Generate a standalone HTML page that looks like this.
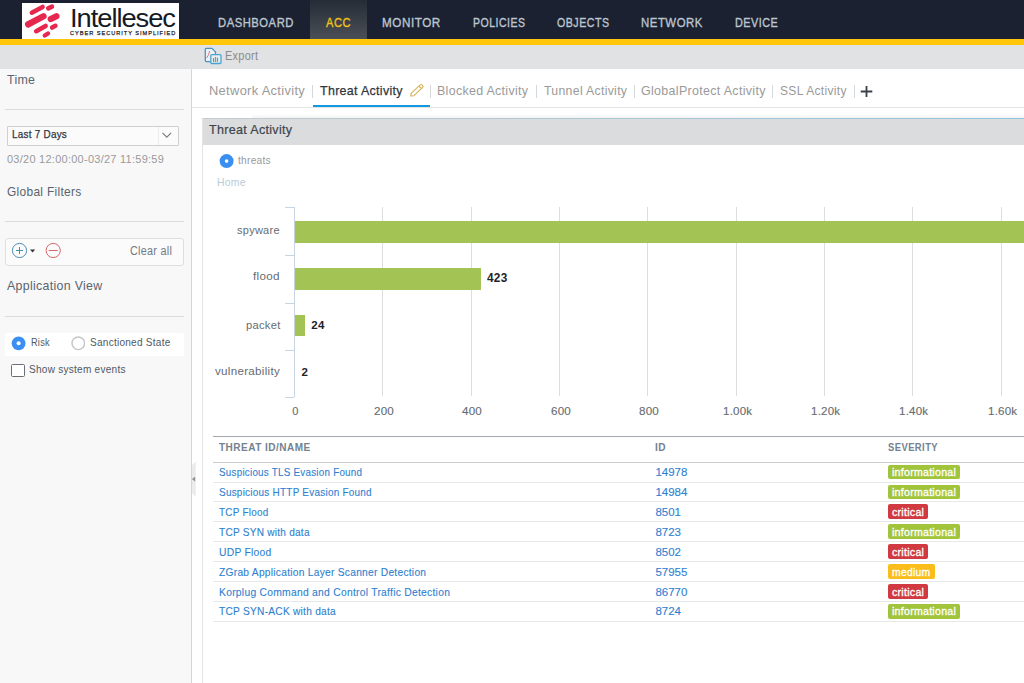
<!DOCTYPE html>
<html><head><meta charset="utf-8"><style>
html,body{margin:0;padding:0;}
body{width:1024px;height:683px;overflow:hidden;position:relative;background:#fff;font-family:"Liberation Sans",sans-serif;}
.t{position:absolute;white-space:nowrap;line-height:1;}
</style></head><body>
<div style="position:absolute;left:0;top:0;width:1024px;height:39px;background:#1b2130"></div>
<div style="position:absolute;left:310px;top:0;width:57px;height:39px;background:linear-gradient(#262c36,#4a4f57)"></div>
<div style="position:absolute;left:0;top:39px;width:1024px;height:6px;background:#ffc60a"></div>
<div style="position:absolute;left:22px;top:3px;width:157px;height:36px;background:#fff"></div>
<svg style="position:absolute;left:0;top:0" width="70" height="40" viewBox="0 0 70 40">
<g stroke="#e6284e" stroke-linecap="round" fill="none">
<line x1="31.8" y1="12.7" x2="42.6" y2="6.9" stroke-width="4.5"/>
<line x1="48.2" y1="8.4" x2="52" y2="6.6" stroke-width="4.5"/>
<line x1="28.2" y1="24.4" x2="43.5" y2="16.2" stroke-width="6.3"/>
<line x1="50.8" y1="19" x2="56.4" y2="16.2" stroke-width="6.3"/>
<line x1="36.2" y1="31.2" x2="45.6" y2="25.9" stroke-width="4.6"/>
<line x1="52.2" y1="27.6" x2="55.4" y2="25.8" stroke-width="4.6"/>
<line x1="44.8" y1="35.5" x2="48" y2="33.5" stroke-width="4.4"/>
</g></svg>
<div class="t" style="left:69.60px;top:4.67px;font-size:26.5px;color:#151a24;letter-spacing:-1.000px;transform:scaleX(1.0296);transform-origin:0 0;">Intellesec</div>
<div class="t" style="left:69.80px;top:30.61px;font-size:5.9px;color:#23272f;letter-spacing:1.000px;transform:scaleX(0.9573);transform-origin:0 0;-webkit-text-stroke:0.25px #23272f;">CYBER SECURITY SIMPLIFIED</div>
<div class="t" style="left:218.00px;top:16.00px;font-size:13px;color:#bcc6d0;letter-spacing:0.600px;transform:scaleX(0.8652);transform-origin:0 0;-webkit-text-stroke:0.35px #bcc6d0;">DASHBOARD</div>
<div class="t" style="left:382.10px;top:16.00px;font-size:13px;color:#bcc6d0;letter-spacing:0.600px;transform:scaleX(0.8990);transform-origin:0 0;-webkit-text-stroke:0.35px #bcc6d0;">MONITOR</div>
<div class="t" style="left:472.90px;top:16.00px;font-size:13px;color:#bcc6d0;letter-spacing:0.600px;transform:scaleX(0.8104);transform-origin:0 0;-webkit-text-stroke:0.35px #bcc6d0;">POLICIES</div>
<div class="t" style="left:557.00px;top:16.00px;font-size:13px;color:#bcc6d0;letter-spacing:0.600px;transform:scaleX(0.8182);transform-origin:0 0;-webkit-text-stroke:0.35px #bcc6d0;">OBJECTS</div>
<div class="t" style="left:641.40px;top:16.00px;font-size:13px;color:#bcc6d0;letter-spacing:0.600px;transform:scaleX(0.8767);transform-origin:0 0;-webkit-text-stroke:0.35px #bcc6d0;">NETWORK</div>
<div class="t" style="left:735.00px;top:16.00px;font-size:13px;color:#bcc6d0;letter-spacing:0.600px;transform:scaleX(0.8326);transform-origin:0 0;-webkit-text-stroke:0.35px #bcc6d0;">DEVICE</div>
<div class="t" style="left:326.00px;top:16.00px;font-size:13px;color:#f3c219;letter-spacing:0.600px;transform:scaleX(0.8516);transform-origin:0 0;-webkit-text-stroke:0.35px #f3c219;">ACC</div>
<div style="position:absolute;left:0;top:45px;width:1024px;height:24px;background:#e1e2e4"></div>
<svg style="position:absolute;left:203px;top:46px" width="20" height="20" viewBox="0 0 20 20">
<path d="M7.3 15.6 h-4 q-1 0 -1 -1 v-11.3 q0 -1 1 -1 h5.6 l3.6 3.6 v3.2" fill="#eef1f4" stroke="#4a93bd" stroke-width="1.3"/>
<path d="M3.6 12 q2.5 -3 3 -7" fill="none" stroke="#d97a80" stroke-width="1"/>
<rect x="7.8" y="8.7" width="10.2" height="8.8" rx="1" fill="#e9eef2" stroke="#4da3d0" stroke-width="1.3"/>
<rect x="9.9" y="12" width="1.2" height="4" fill="#d96a70"/>
<rect x="11.9" y="11" width="1.2" height="5" fill="#5cb860"/>
<rect x="13.9" y="11.7" width="1.2" height="4.3" fill="#4da3d0"/>
</svg>
<div class="t" style="left:225.00px;top:49.00px;font-size:13px;color:#8b8b8b;letter-spacing:0.325px;transform:scaleX(0.8418);transform-origin:0 0;">Export</div>
<div style="position:absolute;left:0;top:69px;width:191px;height:614px;background:#f8f8f8"></div>
<div style="position:absolute;left:191px;top:69px;width:1px;height:614px;background:#d6d6d6"></div>
<div class="t" style="left:7.00px;top:72.57px;font-size:13.5px;color:#5a646e;letter-spacing:0.338px;transform:scaleX(0.9177);transform-origin:0 0;">Time</div>
<div style="position:absolute;left:5px;top:109px;width:179px;height:1px;background:#dcdcdc"></div>
<div style="position:absolute;left:7px;top:126px;width:170px;height:18px;border:1px solid #cfcfcf;background:#fbfbfb;border-radius:1px"></div>
<div style="position:absolute;left:158px;top:127px;width:1px;height:18px;background:#ededed"></div>
<svg style="position:absolute;left:160px;top:129px" width="14" height="12" viewBox="0 0 14 12"><path d="M2.5 3.8 L6.8 8.2 L11.1 3.8" fill="none" stroke="#7a7a7a" stroke-width="1.1"/></svg>
<div class="t" style="left:12.40px;top:129.27px;font-size:11.5px;color:#2e3440;letter-spacing:0.288px;transform:scaleX(0.8617);transform-origin:0 0;-webkit-text-stroke:0.25px #2e3440;">Last 7 Days</div>
<div class="t" style="left:7.00px;top:153.69px;font-size:11px;color:#9a9a9a;letter-spacing:0.275px;transform:scaleX(0.9965);transform-origin:0 0;">03/20 12:00:00-03/27 11:59:59</div>
<div class="t" style="left:7.40px;top:184.87px;font-size:13.5px;color:#5a646e;letter-spacing:0.338px;transform:scaleX(0.8842);transform-origin:0 0;">Global Filters</div>
<div style="position:absolute;left:5px;top:221px;width:179px;height:1px;background:#dcdcdc"></div>
<div style="position:absolute;left:5px;top:238px;width:177px;height:26px;border:1px solid #dedede;background:#fbfbfb;border-radius:3px"></div>
<svg style="position:absolute;left:8px;top:240px" width="60" height="22" viewBox="0 0 60 22">
<circle cx="11.5" cy="10.5" r="7.1" fill="none" stroke="#4a8db2" stroke-width="1"/>
<path d="M11.5 7 v7 M8 10.5 h7" stroke="#4a8db2" stroke-width="1"/>
<path d="M22 9.6 h5.2 l-2.6 3 z" fill="#333"/>
<circle cx="45.2" cy="10.5" r="7.1" fill="none" stroke="#d4676b" stroke-width="1"/>
<path d="M40.7 10.5 h9" stroke="#d4676b" stroke-width="1"/>
</svg>
<div class="t" style="left:130.40px;top:245.22px;font-size:12.5px;color:#707a84;letter-spacing:0.312px;transform:scaleX(0.8646);transform-origin:0 0;">Clear all</div>
<div class="t" style="left:7.40px;top:279.37px;font-size:13.5px;color:#5a646e;letter-spacing:0.338px;transform:scaleX(0.9161);transform-origin:0 0;">Application View</div>
<div style="position:absolute;left:5px;top:316px;width:179px;height:1px;background:#dcdcdc"></div>
<div style="position:absolute;left:5px;top:333px;width:179px;height:23px;background:#fff;border-radius:2px"></div>
<svg style="position:absolute;left:5px;top:330px" width="80" height="28" viewBox="0 0 80 28">
<circle cx="13.6" cy="13.3" r="6.9" fill="#3b8ff0"/>
<circle cx="13.6" cy="13.3" r="2" fill="#fff"/>
<circle cx="73.3" cy="13.3" r="6.3" fill="#fff" stroke="#c6c6c6" stroke-width="1.4"/>
</svg>
<div class="t" style="left:30.60px;top:336.67px;font-size:11.5px;color:#4f5964;letter-spacing:0.288px;transform:scaleX(0.7999);transform-origin:0 0;">Risk</div>
<div class="t" style="left:90.00px;top:336.67px;font-size:11.5px;color:#4f5964;letter-spacing:0.288px;transform:scaleX(0.8737);transform-origin:0 0;">Sanctioned State</div>
<div style="position:absolute;left:11px;top:363.5px;width:11.5px;height:11.5px;border:1px solid #6a6f74;border-radius:1.5px;background:#fff"></div>
<div class="t" style="left:29.30px;top:363.69px;font-size:11px;color:#4f5964;letter-spacing:0.275px;transform:scaleX(0.9143);transform-origin:0 0;">Show system events</div>
<svg style="position:absolute;left:191px;top:460px" width="8" height="40" viewBox="0 0 8 40"><path d="M1 5 L4.8 1.8 V36.8 L1 33 Z" fill="#ebebeb"/><path d="M0.8 19.1 L4.2 16.7 V21.6 Z" fill="#8f9398"/></svg>
<div class="t" style="left:209.20px;top:83.67px;font-size:13.5px;color:#9a9a9a;letter-spacing:0.338px;transform:scaleX(0.9539);transform-origin:0 0;">Network Activity</div>
<div class="t" style="left:320.00px;top:83.67px;font-size:13.5px;color:#2e353e;letter-spacing:0.338px;transform:scaleX(0.9217);transform-origin:0 0;-webkit-text-stroke:0.25px #2e353e;">Threat Activity</div>
<div class="t" style="left:437.10px;top:83.67px;font-size:13.5px;color:#9a9a9a;letter-spacing:0.338px;transform:scaleX(0.9206);transform-origin:0 0;">Blocked Activity</div>
<div class="t" style="left:543.75px;top:83.67px;font-size:13.5px;color:#9a9a9a;letter-spacing:0.338px;transform:scaleX(0.9095);transform-origin:0 0;">Tunnel Activity</div>
<div class="t" style="left:641.00px;top:83.67px;font-size:13.5px;color:#9a9a9a;letter-spacing:0.338px;transform:scaleX(0.9240);transform-origin:0 0;">GlobalProtect Activity</div>
<div class="t" style="left:779.70px;top:83.67px;font-size:13.5px;color:#9a9a9a;letter-spacing:0.338px;transform:scaleX(0.8913);transform-origin:0 0;">SSL Activity</div>
<div style="position:absolute;left:312.2px;top:85px;width:1px;height:12.5px;background:#d3d8dc"></div>
<div style="position:absolute;left:430.0px;top:85px;width:1px;height:12.5px;background:#d3d8dc"></div>
<div style="position:absolute;left:535.8px;top:85px;width:1px;height:12.5px;background:#d3d8dc"></div>
<div style="position:absolute;left:634.2px;top:85px;width:1px;height:12.5px;background:#d3d8dc"></div>
<div style="position:absolute;left:772.3px;top:85px;width:1px;height:12.5px;background:#d3d8dc"></div>
<div style="position:absolute;left:853.8px;top:85px;width:1px;height:12.5px;background:#d3d8dc"></div>
<svg style="position:absolute;left:408px;top:83px" width="17" height="15" viewBox="0 0 17 15"><path d="M2.6 13 L3.4 10.2 L12.2 1.8 a1.2 1.2 0 0 1 1.7 0 l0.8 0.8 a1.2 1.2 0 0 1 0 1.7 L5.9 12.7 Z M11 3.1 L13.3 5.4" fill="none" stroke="#d6b254" stroke-width="1.1" stroke-linejoin="round"/></svg>
<svg style="position:absolute;left:858.2px;top:83.3px" width="17" height="17" viewBox="0 0 17 17"><path d="M8.5 2.9 v11.2 M2.7 8.5 h11.6" stroke="#3a4048" stroke-width="1.8"/></svg>
<div style="position:absolute;left:192px;top:107px;width:832px;height:1px;background:#e3e3e3"></div>
<div style="position:absolute;left:312.5px;top:104.5px;width:117.5px;height:2.3px;background:#1398e2"></div>
<div style="position:absolute;left:202px;top:118px;width:1px;height:565px;background:#e3e3e3"></div>
<div style="position:absolute;left:252px;top:115px;width:772px;height:2.5px;background:linear-gradient(#fbfbfb,#f2f3f3)"></div>
<div style="position:absolute;left:203px;top:118px;width:821px;height:27px;background:#dbdcdd;border-top-left-radius:2px"></div>
<div style="position:absolute;left:203px;top:117.5px;width:821px;height:1.5px;background:linear-gradient(90deg,#c4cbd0,#abc8d6 50%,#92c2dc)"></div>
<div class="t" style="left:209.00px;top:123.00px;font-size:13px;color:#3d444c;letter-spacing:0.325px;transform:scaleX(0.9641);transform-origin:0 0;-webkit-text-stroke:0.2px #3d444c;">Threat Activity</div>
<svg style="position:absolute;left:216px;top:151px" width="20" height="20" viewBox="0 0 20 20">
<circle cx="10.6" cy="10.1" r="7" fill="#3b8ff0"/><circle cx="10.6" cy="10.1" r="1.8" fill="#fff"/></svg>
<div class="t" style="left:237.90px;top:154.57px;font-size:11.5px;color:#9a9a9a;letter-spacing:0.288px;transform:scaleX(0.8866);transform-origin:0 0;">threats</div>
<div class="t" style="left:217.10px;top:176.59px;font-size:11px;color:#b7ccd8;letter-spacing:0.275px;transform:scaleX(0.9480);transform-origin:0 0;">Home</div>
<div style="position:absolute;left:382.35px;top:207px;width:1px;height:189px;background:#dddddd"></div>
<div style="position:absolute;left:470.70px;top:207px;width:1px;height:189px;background:#dddddd"></div>
<div style="position:absolute;left:559.05px;top:207px;width:1px;height:189px;background:#dddddd"></div>
<div style="position:absolute;left:647.40px;top:207px;width:1px;height:189px;background:#dddddd"></div>
<div style="position:absolute;left:735.75px;top:207px;width:1px;height:189px;background:#dddddd"></div>
<div style="position:absolute;left:824.10px;top:207px;width:1px;height:189px;background:#dddddd"></div>
<div style="position:absolute;left:912.45px;top:207px;width:1px;height:189px;background:#dddddd"></div>
<div style="position:absolute;left:1000.80px;top:207px;width:1px;height:189px;background:#dddddd"></div>
<div style="position:absolute;left:294px;top:207px;width:1px;height:190px;background:#c7d4e2"></div>
<div style="position:absolute;left:285px;top:207.0px;width:9px;height:1px;background:#c7d4e2"></div>
<div style="position:absolute;left:285px;top:254.5px;width:9px;height:1px;background:#c7d4e2"></div>
<div style="position:absolute;left:285px;top:302.5px;width:9px;height:1px;background:#c7d4e2"></div>
<div style="position:absolute;left:285px;top:350.0px;width:9px;height:1px;background:#c7d4e2"></div>
<div style="position:absolute;left:285px;top:396.5px;width:9px;height:1px;background:#c7d4e2"></div>
<div style="position:absolute;left:295px;top:221.2px;width:729.00px;height:21.6px;background:#a3c455"></div>
<div style="position:absolute;left:295px;top:268.0px;width:185.61px;height:21.6px;background:#a3c455"></div>
<div style="position:absolute;left:295px;top:314.8px;width:10.00px;height:21.6px;background:#a3c455"></div>
<div class="t" style="left:237.00px;top:224.97px;font-size:11.5px;color:#666b70;letter-spacing:0.288px;transform:scaleX(0.9539);transform-origin:0 0;">spyware</div>
<div class="t" style="left:253.10px;top:271.37px;font-size:11.5px;color:#666b70;letter-spacing:0.288px;transform:scaleX(1.0158);transform-origin:0 0;">flood</div>
<div class="t" style="left:245.80px;top:319.57px;font-size:11.5px;color:#666b70;letter-spacing:0.288px;transform:scaleX(0.9713);transform-origin:0 0;">packet</div>
<div class="t" style="left:215.30px;top:366.47px;font-size:11.5px;color:#666b70;letter-spacing:0.288px;transform:scaleX(1.0098);transform-origin:0 0;">vulnerability</div>
<div class="t" style="left:487.00px;top:271.84px;font-size:12px;color:#1f2328;font-weight:bold;letter-spacing:0.300px;transform:scaleX(0.9847);transform-origin:0 0;">423</div>
<div class="t" style="left:311.30px;top:320.07px;font-size:11.5px;color:#1f2328;font-weight:bold;letter-spacing:0.203px;">24</div>
<div class="t" style="left:301.40px;top:366.97px;font-size:11.5px;color:#1f2328;font-weight:bold;">2</div>
<div class="t" style="left:292.19px;top:405.89px;font-size:11px;color:#666b70;-webkit-text-stroke:0.12px #666b70;">0</div>
<div class="t" style="left:373.94px;top:405.89px;font-size:11px;color:#666b70;letter-spacing:0.200px;transform:scaleX(1.0570);transform-origin:0 0;-webkit-text-stroke:0.12px #666b70;">200</div>
<div class="t" style="left:462.29px;top:405.89px;font-size:11px;color:#666b70;letter-spacing:0.200px;transform:scaleX(1.0570);transform-origin:0 0;-webkit-text-stroke:0.12px #666b70;">400</div>
<div class="t" style="left:550.64px;top:405.89px;font-size:11px;color:#666b70;letter-spacing:0.200px;transform:scaleX(1.0570);transform-origin:0 0;-webkit-text-stroke:0.12px #666b70;">600</div>
<div class="t" style="left:638.99px;top:405.89px;font-size:11px;color:#666b70;letter-spacing:0.200px;transform:scaleX(1.0570);transform-origin:0 0;-webkit-text-stroke:0.12px #666b70;">800</div>
<div class="t" style="left:722.70px;top:405.89px;font-size:11px;color:#666b70;letter-spacing:0.200px;transform:scaleX(1.0489);transform-origin:0 0;-webkit-text-stroke:0.12px #666b70;">1.00k</div>
<div class="t" style="left:811.05px;top:405.89px;font-size:11px;color:#666b70;letter-spacing:0.200px;transform:scaleX(1.0489);transform-origin:0 0;-webkit-text-stroke:0.12px #666b70;">1.20k</div>
<div class="t" style="left:899.40px;top:405.89px;font-size:11px;color:#666b70;letter-spacing:0.200px;transform:scaleX(1.0489);transform-origin:0 0;-webkit-text-stroke:0.12px #666b70;">1.40k</div>
<div class="t" style="left:987.75px;top:405.89px;font-size:11px;color:#666b70;letter-spacing:0.200px;transform:scaleX(1.0489);transform-origin:0 0;-webkit-text-stroke:0.12px #666b70;">1.60k</div>
<div style="position:absolute;left:212.5px;top:436px;width:812px;height:1px;background:#a3a9ae"></div>
<div style="position:absolute;left:212.5px;top:462px;width:812px;height:1px;background:#c9cdd0"></div>
<div class="t" style="left:219.30px;top:443.30px;font-size:10.4px;color:#748290;font-weight:bold;letter-spacing:0.500px;transform:scaleX(0.9646);transform-origin:0 0;">THREAT ID/NAME</div>
<div class="t" style="left:655.40px;top:443.30px;font-size:10.4px;color:#748290;font-weight:bold;letter-spacing:0.500px;transform:scaleX(0.9719);transform-origin:0 0;">ID</div>
<div class="t" style="left:888.30px;top:443.30px;font-size:10.4px;color:#748290;font-weight:bold;letter-spacing:0.500px;transform:scaleX(0.9042);transform-origin:0 0;">SEVERITY</div>
<div class="t" style="left:218.80px;top:467.17px;font-size:11.5px;color:#2f7fd0;letter-spacing:0.288px;transform:scaleX(0.8544);transform-origin:0 0;-webkit-text-stroke:0.12px #2f7fd0;">Suspicious TLS Evasion Found</div>
<div class="t" style="left:655.40px;top:467.17px;font-size:11.5px;color:#2f7fd0;-webkit-text-stroke:0.12px #2f7fd0;">14978</div>
<div style="position:absolute;left:888.3px;top:464.6px;width:71.7px;height:14.7px;background:#a2c43b;border-radius:2px"></div>
<div class="t" style="left:892.30px;top:467.17px;font-size:11.5px;color:#ffffff;letter-spacing:0.288px;transform:scaleX(0.9207);transform-origin:0 0;-webkit-text-stroke:0.32px #ffffff;">informational</div>
<div style="position:absolute;left:212.5px;top:481.5px;width:812px;height:1px;background:#e6e8e9"></div>
<div class="t" style="left:218.80px;top:487.07px;font-size:11.5px;color:#2f7fd0;letter-spacing:0.288px;transform:scaleX(0.8642);transform-origin:0 0;-webkit-text-stroke:0.12px #2f7fd0;">Suspicious HTTP Evasion Found</div>
<div class="t" style="left:655.40px;top:487.07px;font-size:11.5px;color:#2f7fd0;-webkit-text-stroke:0.12px #2f7fd0;">14984</div>
<div style="position:absolute;left:888.3px;top:484.5px;width:71.7px;height:14.7px;background:#a2c43b;border-radius:2px"></div>
<div class="t" style="left:892.30px;top:487.07px;font-size:11.5px;color:#ffffff;letter-spacing:0.288px;transform:scaleX(0.9207);transform-origin:0 0;-webkit-text-stroke:0.32px #ffffff;">informational</div>
<div style="position:absolute;left:212.5px;top:501.4px;width:812px;height:1px;background:#e6e8e9"></div>
<div class="t" style="left:218.80px;top:506.97px;font-size:11.5px;color:#2f7fd0;letter-spacing:0.288px;transform:scaleX(0.8624);transform-origin:0 0;-webkit-text-stroke:0.12px #2f7fd0;">TCP Flood</div>
<div class="t" style="left:655.40px;top:506.97px;font-size:11.5px;color:#2f7fd0;-webkit-text-stroke:0.12px #2f7fd0;">8501</div>
<div style="position:absolute;left:888.3px;top:504.4px;width:39.7px;height:14.7px;background:#d13a41;border-radius:2px"></div>
<div class="t" style="left:892.30px;top:506.97px;font-size:11.5px;color:#ffffff;letter-spacing:0.288px;transform:scaleX(0.9222);transform-origin:0 0;-webkit-text-stroke:0.32px #ffffff;">critical</div>
<div style="position:absolute;left:212.5px;top:521.3px;width:812px;height:1px;background:#e6e8e9"></div>
<div class="t" style="left:218.80px;top:526.87px;font-size:11.5px;color:#2f7fd0;letter-spacing:0.288px;transform:scaleX(0.8747);transform-origin:0 0;-webkit-text-stroke:0.12px #2f7fd0;">TCP SYN with data</div>
<div class="t" style="left:655.40px;top:526.87px;font-size:11.5px;color:#2f7fd0;-webkit-text-stroke:0.12px #2f7fd0;">8723</div>
<div style="position:absolute;left:888.3px;top:524.3px;width:71.7px;height:14.7px;background:#a2c43b;border-radius:2px"></div>
<div class="t" style="left:892.30px;top:526.87px;font-size:11.5px;color:#ffffff;letter-spacing:0.288px;transform:scaleX(0.9207);transform-origin:0 0;-webkit-text-stroke:0.32px #ffffff;">informational</div>
<div style="position:absolute;left:212.5px;top:541.2px;width:812px;height:1px;background:#e6e8e9"></div>
<div class="t" style="left:218.80px;top:546.77px;font-size:11.5px;color:#2f7fd0;letter-spacing:0.288px;transform:scaleX(0.8966);transform-origin:0 0;-webkit-text-stroke:0.12px #2f7fd0;">UDP Flood</div>
<div class="t" style="left:655.40px;top:546.77px;font-size:11.5px;color:#2f7fd0;-webkit-text-stroke:0.12px #2f7fd0;">8502</div>
<div style="position:absolute;left:888.3px;top:544.2px;width:39.7px;height:14.7px;background:#d13a41;border-radius:2px"></div>
<div class="t" style="left:892.30px;top:546.77px;font-size:11.5px;color:#ffffff;letter-spacing:0.288px;transform:scaleX(0.9222);transform-origin:0 0;-webkit-text-stroke:0.32px #ffffff;">critical</div>
<div style="position:absolute;left:212.5px;top:561.1px;width:812px;height:1px;background:#e6e8e9"></div>
<div class="t" style="left:218.80px;top:566.67px;font-size:11.5px;color:#2f7fd0;letter-spacing:0.288px;transform:scaleX(0.8897);transform-origin:0 0;-webkit-text-stroke:0.12px #2f7fd0;">ZGrab Application Layer Scanner Detection</div>
<div class="t" style="left:655.40px;top:566.67px;font-size:11.5px;color:#2f7fd0;-webkit-text-stroke:0.12px #2f7fd0;">57955</div>
<div style="position:absolute;left:888.3px;top:564.1px;width:46.6px;height:14.7px;background:#fbbd1b;border-radius:2px"></div>
<div class="t" style="left:892.30px;top:566.67px;font-size:11.5px;color:#ffffff;letter-spacing:0.288px;transform:scaleX(0.8998);transform-origin:0 0;-webkit-text-stroke:0.32px #ffffff;">medium</div>
<div style="position:absolute;left:212.5px;top:581.0px;width:812px;height:1px;background:#e6e8e9"></div>
<div class="t" style="left:218.80px;top:586.57px;font-size:11.5px;color:#2f7fd0;letter-spacing:0.288px;transform:scaleX(0.8975);transform-origin:0 0;-webkit-text-stroke:0.12px #2f7fd0;">Korplug Command and Control Traffic Detection</div>
<div class="t" style="left:655.40px;top:586.57px;font-size:11.5px;color:#2f7fd0;-webkit-text-stroke:0.12px #2f7fd0;">86770</div>
<div style="position:absolute;left:888.3px;top:584.0px;width:39.7px;height:14.7px;background:#d13a41;border-radius:2px"></div>
<div class="t" style="left:892.30px;top:586.57px;font-size:11.5px;color:#ffffff;letter-spacing:0.288px;transform:scaleX(0.9222);transform-origin:0 0;-webkit-text-stroke:0.32px #ffffff;">critical</div>
<div style="position:absolute;left:212.5px;top:600.9px;width:812px;height:1px;background:#e6e8e9"></div>
<div class="t" style="left:218.80px;top:606.47px;font-size:11.5px;color:#2f7fd0;letter-spacing:0.288px;transform:scaleX(0.8835);transform-origin:0 0;-webkit-text-stroke:0.12px #2f7fd0;">TCP SYN-ACK with data</div>
<div class="t" style="left:655.40px;top:606.47px;font-size:11.5px;color:#2f7fd0;-webkit-text-stroke:0.12px #2f7fd0;">8724</div>
<div style="position:absolute;left:888.3px;top:603.9px;width:71.7px;height:14.7px;background:#a2c43b;border-radius:2px"></div>
<div class="t" style="left:892.30px;top:606.47px;font-size:11.5px;color:#ffffff;letter-spacing:0.288px;transform:scaleX(0.9207);transform-origin:0 0;-webkit-text-stroke:0.32px #ffffff;">informational</div>
<div style="position:absolute;left:212.5px;top:620.8px;width:812px;height:1px;background:#e6e8e9"></div>
</body></html>
